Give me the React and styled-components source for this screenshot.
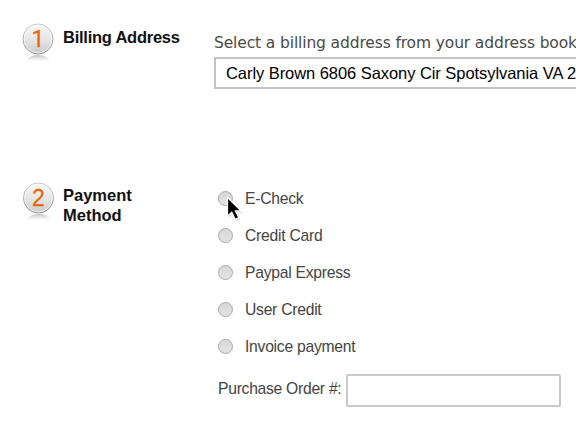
import React from "react";
import styled, { createGlobalStyle } from "styled-components";

const GlobalStyle = createGlobalStyle`
  * { box-sizing: border-box; }
  body { margin: 0; background: #fff; overflow: hidden; }
`;

const Page = styled.main`
  width: 576px;
  height: 430px;
  overflow: hidden;
  background: #fff;
  color: #444;
  font-family: "Liberation Sans", Arial, sans-serif;
  font-size: 15.7px;
`;

const Step = styled.section`
  display: grid;
  grid-template-columns: 63px 151px 1fr;
  height: ${(p) => p.$height}px;
  padding-top: ${(p) => p.$top}px;
`;

const Badge = styled.svg`
  display: block;
  width: 40px;
  height: 44px;
  margin-left: 18px;
  margin-top: ${(p) => p.$drop || 0}px;
`;

const Title = styled.h2`
  margin: ${(p) => p.$top}px 0 0;
  color: #111;
  font-size: 16.5px;
  font-weight: 700;
  line-height: 19.5px;
  letter-spacing: ${(p) => p.$tracking || 0}px;
`;

const AddressField = styled.div`
  display: flex;
  flex-direction: column;
  padding-top: 12px;
  min-width: 0;
`;

const Hint = styled.label`
  height: 24px;
  color: #4a4a4a;
  font-family: "DejaVu Sans", Verdana, sans-serif;
  font-size: 15.5px;
  line-height: 20px;
  letter-spacing: -0.13px;
  white-space: nowrap;
`;

const AddressSelect = styled.div`
  width: 420px;
  height: 32px;
  padding-left: 10px;
  border: 2px solid #c3c3c3;
  color: #000;
  font-size: 16.5px;
  line-height: 29px;
  letter-spacing: -0.06px;
  white-space: nowrap;
`;

const Options = styled.div`
  display: flex;
  flex-direction: column;
  padding-left: 4px;
`;

const Option = styled.label`
  display: flex;
  align-items: center;
  height: 37.1px;
  letter-spacing: -0.26px;
`;

const RadioWrap = styled.span`
  position: relative;
  display: block;
  width: 15px;
  height: 15px;
  margin-right: 12px;
`;

const Radio = styled.span`
  display: block;
  width: 15px;
  height: 15px;
  border: 1.5px solid #a9a9a9;
  border-radius: 50%;
  background: linear-gradient(#d7d7d7, #e4e4e4);
`;

const Cursor = styled.svg`
  position: absolute;
  left: 8px;
  top: 5px;
  width: 20px;
  height: 28px;
  overflow: visible;
`;

const OrderRow = styled.div`
  display: flex;
  align-items: center;
  height: 33px;
  margin-top: 9px;
`;

const OrderLabel = styled.label`
  width: 128px;
  padding-bottom: 3px;
  letter-spacing: -0.28px;
  white-space: nowrap;
`;

const OrderInput = styled.input`
  width: 215px;
  height: 33px;
  border: 2px solid #c9c9c9;
  border-radius: 2px;
  background: #fff;
  outline: none;
`;

const BadgeNumber = styled.text`
  fill: #ed640c;
  font-family: ${(p) => p.$face};
  font-size: 23px;
  text-anchor: middle;
`;

const methods = [
  { name: "E-Check", hovered: true },
  { name: "Credit Card" },
  { name: "Paypal Express" },
  { name: "User Credit" },
  { name: "Invoice payment" },
];

function NumberBadge({ number, dx = 0, drop = 0, face = '"Liberation Sans", Arial, sans-serif' }) {
  const id = `badge-${number}`;
  return (
    <Badge viewBox="0 0 40 44" $drop={drop}>
      <defs>
        <linearGradient id={id} x1="0" y1="0" x2="0" y2="1">
          <stop offset="0" stopColor="#f8f8f8" />
          <stop offset="0.55" stopColor="#e4e4e4" />
          <stop offset="1" stopColor="#cbcbcb" />
        </linearGradient>
        <linearGradient id={`${id}-rim`} x1="0" y1="0" x2="0" y2="1">
          <stop offset="0" stopColor="#c6c6c6" />
          <stop offset="1" stopColor="#8e8e8e" />
        </linearGradient>
        <linearGradient id={`${id}-fade`} gradientUnits="userSpaceOnUse" x1="0" y1="32" x2="0" y2="39">
          <stop offset="0" stopColor="#b0b0b0" />
          <stop offset="0.5" stopColor="#e0e0e0" />
          <stop offset="1" stopColor="#fff" />
        </linearGradient>
      </defs>
      <path d={`M${7 + dx} 40Q${11 + dx} 33 ${20 + dx} 33T${33 + dx} 40Z`} fill={`url(#${id}-fade)`} />
      <circle cx={20 + dx} cy="17" r="15" fill={`url(#${id})`} stroke={`url(#${id}-rim)`} strokeWidth="1" />
      <circle cx={20 + dx} cy="17" r="13.9" fill="none" stroke="#fff" strokeOpacity="0.65" />
      <BadgeNumber x={20 + dx} y="25" $face={face} stroke="#ed640c" strokeWidth="0.3">{number}</BadgeNumber>
    </Badge>
  );
}

function Pointer() {
  return (
    <Cursor viewBox="0 0 20 28">
      <path d="M3 3V22L7.3 18.2L10.6 25.2L14.3 23.4L11.3 17H17Z" fill="#999" opacity="0.3" />
      <path d="M1.5 1.5V20L5.8 16.2L9.2 23.4L12.8 21.6L9.4 14.9H15Z" fill="#000" stroke="#fff" strokeWidth="1.2" />
    </Cursor>
  );
}

export default function App() {
  return (
    <>
      <GlobalStyle />
      <Page>
        <Step $height={158} $top={21}>
          <NumberBadge number="1" drop={1} face="Roboto, sans-serif" />
          <Title $top={7} $tracking={-0.25}>Billing Address</Title>
          <AddressField>
            <Hint>Select a billing address from your address book</Hint>
            <AddressSelect>Carly Brown 6806 Saxony Cir Spotsylvania VA 2</AddressSelect>
          </AddressField>
        </Step>
        <Step $height={272} $top={22}>
          <NumberBadge number="2" dx={0.5} drop={1} />
          <Title $top={6}>Payment<br />Method</Title>
          <Options>
            {methods.map((m) => (
              <Option key={m.name}>
                <RadioWrap>
                  <Radio />
                  {m.hovered && <Pointer />}
                </RadioWrap>
                {m.name}
              </Option>
            ))}
            <OrderRow>
              <OrderLabel>Purchase Order #:</OrderLabel>
              <OrderInput />
            </OrderRow>
          </Options>
        </Step>
      </Page>
    </>
  );
}
